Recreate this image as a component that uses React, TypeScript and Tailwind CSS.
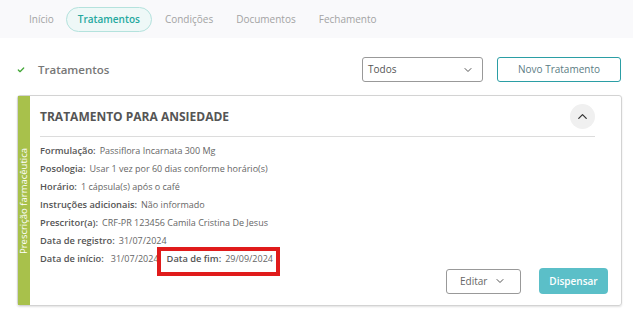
import { ChevronDown, ChevronUp, Check } from "lucide-react";

const tabs = ["Início", "Tratamentos", "Condições", "Documentos", "Fechamento"];

const rows: [string, string][] = [
  ["Formulação:", "Passiflora Incarnata 300 Mg"],
  ["Posologia:", "Usar 1 vez por 60 dias conforme horário(s)"],
  ["Horário:", "1 cápsula(s) após o café"],
  ["Instruções adicionais:", "Não informado"],
  ["Prescritor(a):", "CRF-PR 123456 Camila Cristina De Jesus"],
  ["Data de registro:", "31/07/2024"],
];

export default function App() {
  return (
    <div
      className="w-[633px] h-[335px] bg-white overflow-hidden text-[#555]"
      style={{ fontFamily: "'Open Sans', sans-serif" }}
    >
      {/* tabs */}
      <div className="h-[38px] bg-[#f9f9fb] flex items-center pl-[29px] text-[10px]">
        {tabs.map((t, i) =>
          t === "Tratamentos" ? (
            <div
              key={t}
              className="ml-[12px] h-[25px] px-[11px] flex items-center rounded-full border border-[#b4e2dd] bg-[#eef8f7] text-[#24a89e] font-semibold"
            >
              {t}
            </div>
          ) : (
            <div key={t} className={`text-[#a3a3a3] ${i === 0 ? "" : i === 2 ? "ml-[13px]" : "ml-[23px]"}`}>
              {t}
            </div>
          )
        )}
      </div>

      {/* header row */}
      <div className="flex items-center h-[25px] mt-[19px] pl-[17px] pr-[12px]">
        <Check className="w-[8px] h-[8px] text-[#45a83a]" strokeWidth={4} />
        <div className="ml-[13px] text-[11.5px] font-semibold text-[#777]">Tratamentos</div>
        <div className="ml-auto w-[121px] h-[25px] border border-[#999] rounded-[3px] flex items-center pl-[5px] pr-[8px] text-[10px] text-[#555]">
          Todos
          <ChevronDown className="ml-auto w-[12px] h-[12px] text-[#555]" strokeWidth={2} />
        </div>
        <div className="ml-[14px] w-[124px] h-[25px] border border-[#2b9ea5] rounded-[3px] flex items-center justify-center text-[10px] text-[#5b7c84]">
          Novo Tratamento
        </div>
      </div>

      {/* card */}
      <div className="relative mt-[13px] ml-[17px] w-[605px] h-[211px] flex border border-[#d3d3d3] rounded-[3px] shadow-[0_1px_2px_rgba(0,0,0,0.12)]">
        <div className="w-[12px] bg-[#a8c14b] relative shrink-0">
          <div className="absolute left-1/2 top-1/2 -translate-x-1/2 -translate-y-1/2 -rotate-90 whitespace-nowrap text-[9.5px] text-white">
            Prescrição farmacêutica
          </div>
        </div>
        <div className="flex-1 pl-[10px] pr-[26px] flex flex-col">
          <div className="h-[41px] flex items-center border-b border-[#dcdcdc]">
            <div className="text-[12px] font-bold text-[#555] pt-[1px]">TRATAMENTO PARA ANSIEDADE</div>
            <div className="ml-auto w-[25px] h-[25px] rounded-full bg-[#f0f0f0] flex items-center justify-center">
              <ChevronUp className="w-[15px] h-[15px] text-[#333]" strokeWidth={2} />
            </div>
          </div>
          <div className="pt-[5px] flex flex-col text-[9px]">
            {rows.map(([k, v]) => (
              <div key={k} className="h-[18px] flex items-center">
                <span className="font-semibold text-[#555] text-[9.3px]">{k}</span>
                <span className="ml-[4px] text-[#666]">{v}</span>
              </div>
            ))}
            <div className="h-[18px] flex items-center">
              <span className="font-semibold text-[#555] text-[9.3px]">Data de início:</span>
              <span className="ml-[7px] text-[#666]">31/07/2024</span>
              <span className="ml-[8px] font-semibold text-[#555] text-[9.3px]">Data de fim:</span>
              <span className="ml-[4px] text-[#666]">29/09/2024</span>
            </div>
          </div>
          <div className="mt-auto mb-[11px] flex items-center justify-end -mr-[13px] gap-[18px]">
            <div className="w-[75px] h-[25px] border border-[#999] rounded-[3px] flex items-center pl-[13px] pr-[14px] text-[10px] text-[#666]">
              Editar
              <ChevronDown className="ml-auto w-[12px] h-[12px] text-[#555]" strokeWidth={2} />
            </div>
            <div className="w-[69px] h-[26px] rounded-[4px] bg-[#5bbfc8] flex items-center justify-center text-[10px] font-semibold text-white">
              Dispensar
            </div>
          </div>
        </div>
        {/* red highlight annotation */}
        <div className="absolute left-[139px] top-[151px] w-[123px] h-[29px] border-[4px] border-[#e01b1b]" />
      </div>
    </div>
  );
}
